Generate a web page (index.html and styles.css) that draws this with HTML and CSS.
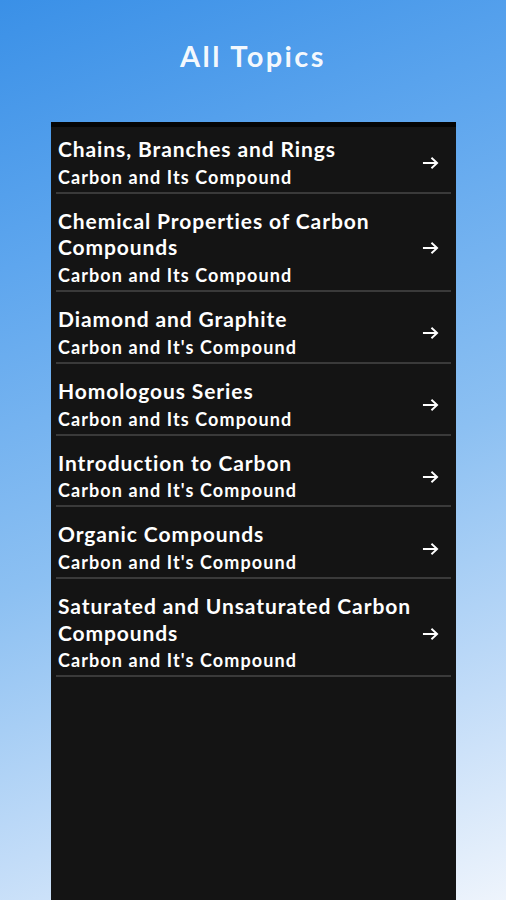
FILE: index.html
```html
<!DOCTYPE html>
<html lang="en">
<head>
    <meta charset="UTF-8">
    <meta name="viewport" content="width=device-width, initial-scale=1.0">
    <title>All Topics</title>
    <link rel="stylesheet" href="styles.css">
</head>
<body>
    <div class="page">
        <h1 class="title">All Topics</h1>

        <div class="panel">
            <ul class="topics">
                <li class="topic">
                    <div class="topic-text">
                        <div class="topic-name">Chains, Branches and Rings</div>
                        <div class="topic-chapter">Carbon and Its Compound</div>
                    </div>
                    <svg class="arrow" viewBox="0 0 18 14"><path d="M1 7h15M10 1.5l6 5.5-6 5.5" fill="none" stroke="#fff" stroke-width="2"/></svg>
                </li>
                <li class="topic">
                    <div class="topic-text">
                        <div class="topic-name">Chemical Properties of Carbon Compounds</div>
                        <div class="topic-chapter">Carbon and Its Compound</div>
                    </div>
                    <svg class="arrow" viewBox="0 0 18 14"><path d="M1 7h15M10 1.5l6 5.5-6 5.5" fill="none" stroke="#fff" stroke-width="2"/></svg>
                </li>
                <li class="topic">
                    <div class="topic-text">
                        <div class="topic-name">Diamond and Graphite</div>
                        <div class="topic-chapter">Carbon and It's Compound</div>
                    </div>
                    <svg class="arrow" viewBox="0 0 18 14"><path d="M1 7h15M10 1.5l6 5.5-6 5.5" fill="none" stroke="#fff" stroke-width="2"/></svg>
                </li>
                <li class="topic">
                    <div class="topic-text">
                        <div class="topic-name">Homologous Series</div>
                        <div class="topic-chapter">Carbon and Its Compound</div>
                    </div>
                    <svg class="arrow" viewBox="0 0 18 14"><path d="M1 7h15M10 1.5l6 5.5-6 5.5" fill="none" stroke="#fff" stroke-width="2"/></svg>
                </li>
                <li class="topic">
                    <div class="topic-text">
                        <div class="topic-name">Introduction to Carbon</div>
                        <div class="topic-chapter">Carbon and It's Compound</div>
                    </div>
                    <svg class="arrow" viewBox="0 0 18 14"><path d="M1 7h15M10 1.5l6 5.5-6 5.5" fill="none" stroke="#fff" stroke-width="2"/></svg>
                </li>
                <li class="topic">
                    <div class="topic-text">
                        <div class="topic-name">Organic Compounds</div>
                        <div class="topic-chapter">Carbon and It's Compound</div>
                    </div>
                    <svg class="arrow" viewBox="0 0 18 14"><path d="M1 7h15M10 1.5l6 5.5-6 5.5" fill="none" stroke="#fff" stroke-width="2"/></svg>
                </li>
                <li class="topic">
                    <div class="topic-text">
                        <div class="topic-name">Saturated and Unsaturated Carbon Compounds</div>
                        <div class="topic-chapter">Carbon and It's Compound</div>
                    </div>
                    <svg class="arrow" viewBox="0 0 18 14"><path d="M1 7h15M10 1.5l6 5.5-6 5.5" fill="none" stroke="#fff" stroke-width="2"/></svg>
                </li>
            </ul>
        </div>
    </div>
</body>
</html>
```

FILE: styles.css
```css
html, body {
    margin: 0;
    height: 100%;
}
body {
    font-family: "Lato", "Open Sans", sans-serif;
    background: linear-gradient(160deg, #3a90e7 0%, #5ea6ee 25%, #8cc0f2 55%, #c2dcf8 80%, #eef4fc 100%);
    overflow: hidden;
}
.page {
    display: flex;
    flex-direction: column;
    align-items: center;
    height: 100%;
}
.title {
    margin: 38px 0 0;
    height: 84px;
    font-size: 29px;
    font-weight: 700;
    letter-spacing: 2.4px;
    color: rgba(255, 255, 255, 0.95);
}
.panel {
    width: 405px;
    margin-left: 1px;
    flex: 1;
    background: linear-gradient(#050505 0, #050505 5px, #141414 5px);
}
.topics {
    list-style: none;
    margin: 0;
    padding: 0 5px;
}
.topic {
    display: flex;
    align-items: center;
    padding: 14px 12px 1px 2px;
    border-bottom: 2px solid #3a3a3a;
    color: #fff;
    font-weight: 700;
}
.topic-text {
    flex: 1;
}
.topic-name {
    font-size: 21px;
    line-height: 26.5px;
    letter-spacing: 0.9px;
}
.topic-chapter {
    margin-top: 1.25px;
    font-size: 18px;
    line-height: 27px;
    letter-spacing: 1.1px;
}
.arrow {
    width: 17px;
    height: 14px;
    margin-left: 8px;
}
```
